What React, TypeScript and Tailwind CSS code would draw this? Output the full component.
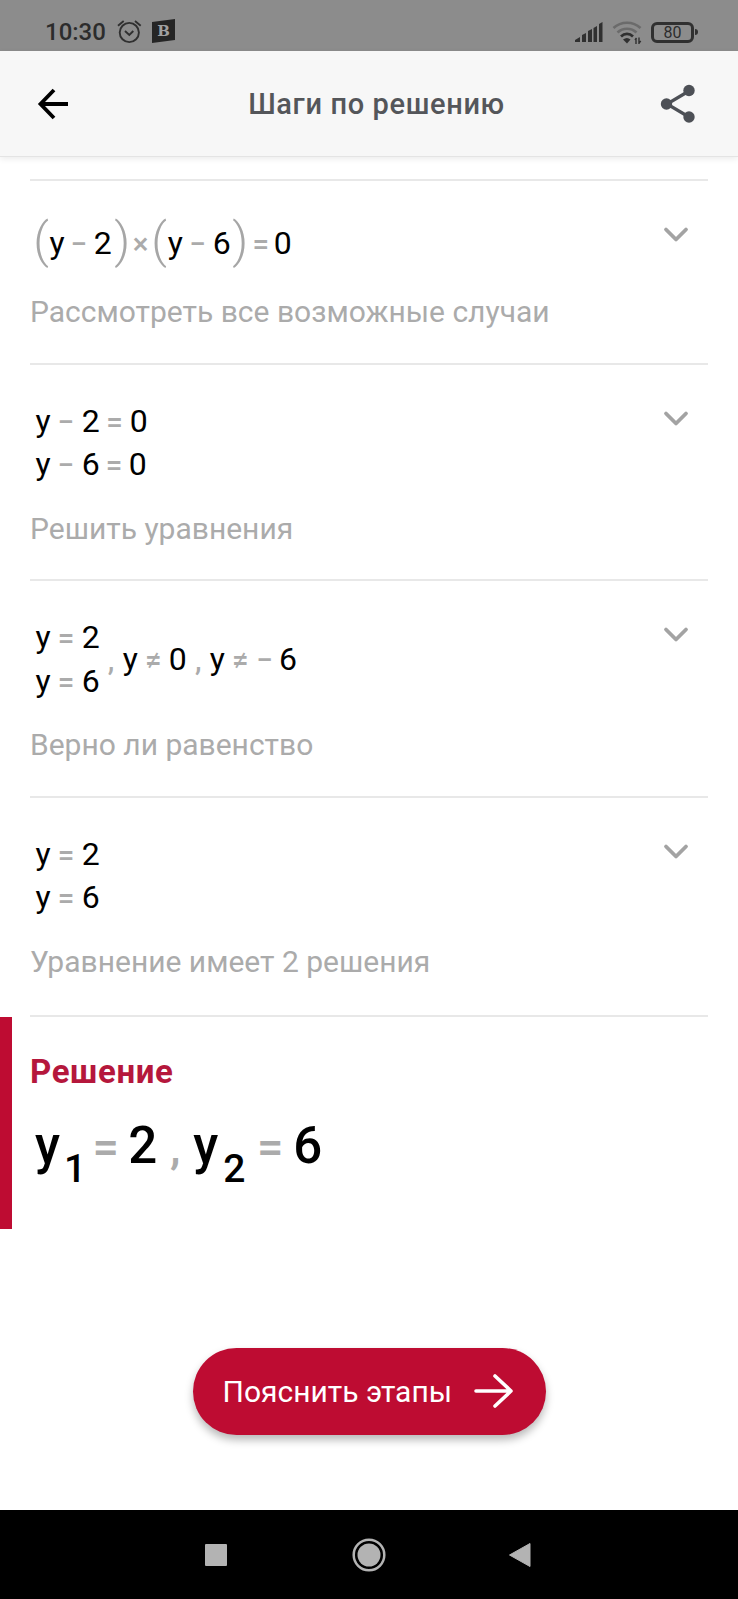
import type { ReactNode } from "react";

function Op({ children, className = "w-[31px]" }: { children: ReactNode; className?: string }) {
  return (
    <span className={`inline-block text-center font-medium text-[#ababab] ${className}`}>
      <span className="text-[0.92em] leading-none">{children}</span>
    </span>
  );
}

function Paren({ children, className }: { children: ReactNode; className: string }) {
  return (
    <span className={`flex h-[44px] items-center justify-center pb-[7px] text-[49px] font-light leading-none text-[#a6a6a6] ${className}`}>
      {children}
    </span>
  );
}

function Chevron() {
  return (
    <svg width="26" height="18" viewBox="0 0 26 18" fill="none" className="mt-[10px] shrink-0">
      <path d="M3 3.5 13 13.5 23 3.5" stroke="#a3a3a3" strokeWidth="3.8" strokeLinecap="round" strokeLinejoin="round" />
    </svg>
  );
}

interface StepProps {
  label: string;
  children: ReactNode;
  className?: string;
}

function Step({ label, children, className = "pb-[32.5px]" }: StepProps) {
  return (
    <div className={`ml-[30px] mr-[30px] border-t-2 border-[#e8e8e8] pt-[35px] ${className}`}>
      <div className="flex items-start justify-between pl-[5.5px] pr-[19px]">
        <div className="text-[32px] leading-[43.5px] text-black">{children}</div>
        <Chevron />
      </div>
      <p className="mt-6 text-[30px] leading-9 text-[#ababab]">{label}</p>
    </div>
  );
}

export default function App() {
  return (
    <div className="flex h-[1599px] w-[738px] flex-col overflow-hidden whitespace-nowrap bg-white font-['Roboto',sans-serif]">
      {/* Status bar */}
      <div className="flex h-[51px] shrink-0 items-end justify-between bg-[#8c8c8c] pb-[6px] pl-[45px] pr-[40px] text-[#2c2c2c]">
        <div className="flex items-center">
          <span className="w-[72px] pt-[2px] text-[24px] font-medium leading-[26px]">10:30</span>
          <svg width="26" height="26" viewBox="0 0 26 26" fill="none" stroke="#303030" strokeWidth="1.9">
            <circle cx="12.3" cy="14.5" r="9.6" />
            <path d="m8 13 4.3 4 4-4M1 7.7 6.7 3M18 3l5.7 4.7" />
          </svg>
          <div className="ml-[9px] flex h-[24px] w-[23px] items-center justify-center bg-[#252525] font-['DejaVu_Serif',serif] text-[15px] font-bold leading-none text-[#a0a0a0] [clip-path:polygon(0_12%,100%_0,100%_88%,0_100%)]">
            B
          </div>
        </div>
        <div className="flex items-center">
          <svg width="28" height="26" viewBox="0 0 28 26" fill="#303030">
            <path d="M0 23v-2l5-3v5zM7 23v-7l4-2v9zM13 23V12l4-2v13zM18.5 23V9l3.5-2v16zM24 23V5l3.5-2v20z" />
          </svg>
          <svg width="30" height="26" viewBox="0 0 30 26" fill="none" className="ml-[9px]" strokeWidth="2.7">
            <path d="M1.5 9c7.5-7 19.5-7 27 0" stroke="#6b6b6b" />
            <path d="M5.5 13.5c5.5-5 13.5-5 19 0" stroke="#6b6b6b" />
            <path d="M9 17.5c3.5-3.4 8.5-3.4 12 0" stroke="#303030" />
            <path d="M11 20.5q4-3 7.5 0L15 24.5z" fill="#303030" />
            <path d="M24 19v6M23 21l1.5-2M27 18.5v6.5M27 24l1.8-2" stroke="#303030" strokeWidth="1.4" />
          </svg>
          <div className="ml-[9px] flex h-[21px] w-[43px] items-center justify-center rounded-[6px] border-[3px] border-[#303030] pt-[2px] text-[16px] leading-none">
            80
          </div>
          <div className="ml-px h-[6px] w-[3px] rounded-r bg-[#303030]" />
        </div>
      </div>

      {/* App bar */}
      <div className="flex h-[106px] shrink-0 items-center justify-between border-b border-[#e4e4e4] bg-[#f7f7f7] pl-[37px] pr-[42px] shadow-[0_2px_6px_rgba(0,0,0,0.08)]">
        <svg width="32" height="32" viewBox="0 0 32 32" fill="none" stroke="#000" strokeWidth="3.8">
          <path d="M31 16H4M17 2 3.5 16 17 30" />
        </svg>
        <h1 className="ml-[24px] text-[29px] font-medium leading-9 tracking-[0.63px] text-[#54565a]">Шаги по решению</h1>
        <svg width="36" height="40" viewBox="0 0 36 40" fill="#4d5056">
          <path d="M29 7 7 20l22 13" fill="none" stroke="#4d5056" strokeWidth="3.2" />
          <circle cx="29" cy="6.5" r="5.7" />
          <circle cx="6.5" cy="20" r="5.7" />
          <circle cx="29" cy="33" r="5.7" />
        </svg>
      </div>

      {/* Steps */}
      <div className="pt-[22px]">
        <Step label="Рассмотреть все возможные случаи">
          <div className="flex items-center pb-[4px] pt-[6px]">
            <Paren className="-ml-[3px] w-[17px]">(</Paren>
            <span>y</span>
            <Op className="w-[29px]">−</Op>
            <span>2</span>
            <Paren className="ml-[3px] w-[15px]">)</Paren>
            <Op className="w-[22px]">×</Op>
            <Paren className="w-[15px]">(</Paren>
            <span className="ml-[1px]">y</span>
            <Op className="w-[30px]">−</Op>
            <span>6</span>
            <Paren className="ml-[2px] w-[15px]">)</Paren>
            <Op className="w-[26px]">=</Op>
            <span>0</span>
          </div>
        </Step>
        <Step label="Решить уравнения">
          <div>y<Op>−</Op>2<Op className="w-[30px]">=</Op>0</div>
          <div>y<Op>−</Op>6<Op className="w-[29px]">=</Op>0</div>
        </Step>
        <Step label="Верно ли равенство">
          <div className="flex items-center">
            <div>
              <div>y<Op>=</Op>2</div>
              <div>y<Op>=</Op>6</div>
            </div>
            <div>
              <Op className="w-[23px]">,</Op>y<Op>≠</Op>0<Op className="w-[23px]">,</Op>y
              <Op>≠</Op><Op className="w-[23px] pr-[5px]">−</Op>6
            </div>
          </div>
        </Step>
        <Step label="Уравнение имеет 2 решения" className="pb-[35px]">
          <div>y<Op>=</Op>2</div>
          <div>y<Op>=</Op>6</div>
        </Step>
      </div>

      {/* Solution */}
      <div className="mx-[30px] h-[2px] shrink-0 bg-[#e8e8e8]" />
      <div className="h-[212px] shrink-0 border-l-[12px] border-[#be0c32] pl-[18px] pt-[36px]">
        <h2 className="text-[33px] font-bold leading-[38px] tracking-[0.6px] text-[#b5173c]">Решение</h2>
        <div className="mt-[25px] flex items-baseline pl-[5px] text-[51px] font-medium leading-[60px] text-black">
          <span>y</span>
          <span className="relative top-[19px] ml-[4px] text-[39px]">1</span>
          <Op className="w-[42px] pr-[3px]">=</Op>
          <span>2</span>
          <Op className="w-[36px]">,</Op>
          <span>y</span>
          <span className="relative top-[19px] ml-[5px] text-[39px]">2</span>
          <Op className="w-[48px] pl-[2px]">=</Op>
          <span>6</span>
        </div>
      </div>

      {/* Explain button */}
      <div className="flex grow justify-center pt-[119px]">
        <button className="flex h-[87px] w-[353px] items-center rounded-full bg-[#be0c32] pl-[30px] text-[30px] text-white shadow-[0_5px_9px_rgba(0,0,0,0.28)]">
          Пояснить этапы
          <svg width="40" height="36" viewBox="0 0 40 36" fill="none" className="ml-[21px]" stroke="#fff" strokeWidth="3.6" strokeLinecap="round" strokeLinejoin="round">
            <path d="M3 18h35M22 3l16 15-16 15" />
          </svg>
        </button>
      </div>

      {/* Navigation bar */}
      <div className="flex h-[89px] shrink-0 items-center justify-center bg-black pr-[2px]">
        <svg width="326" height="34" viewBox="0 0 326 34" fill="#b3b3b3">
          <rect x="0" y="6" width="22" height="22" rx="1" />
          <circle cx="164" cy="17" r="11.5" />
          <circle cx="164" cy="17" r="15.3" fill="none" stroke="#b3b3b3" strokeWidth="2.5" />
          <path d="M304.5 17 325 5.5v23z" stroke="#b3b3b3" strokeLinejoin="round" />
        </svg>
      </div>
    </div>
  );
}
